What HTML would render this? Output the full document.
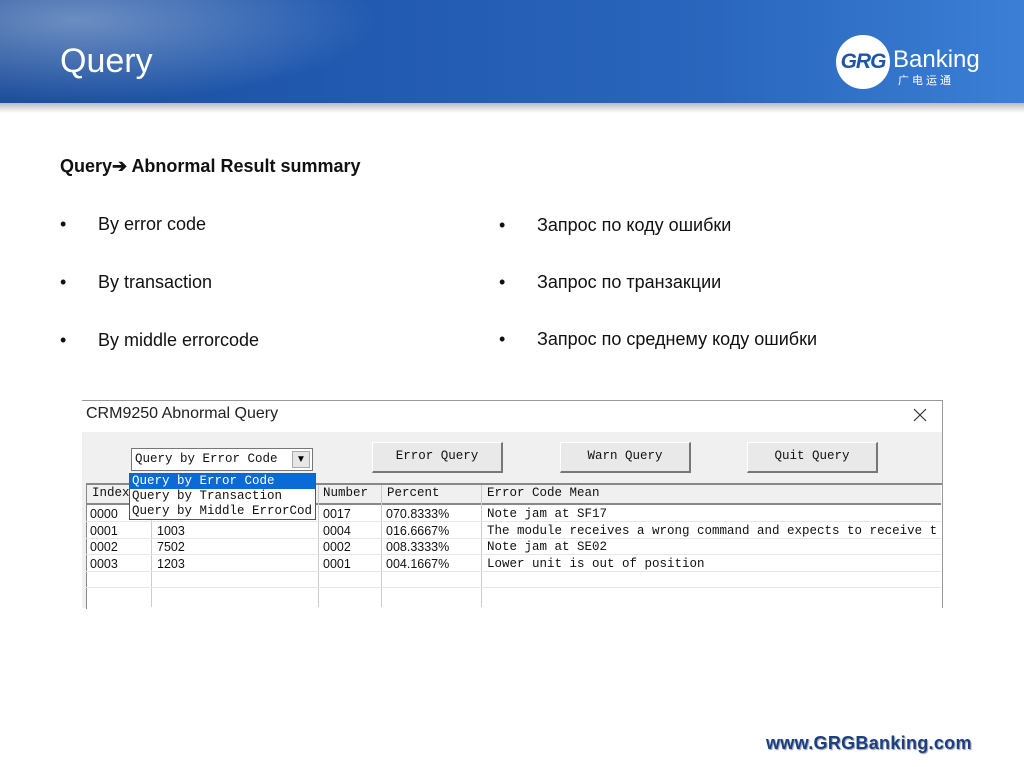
<!DOCTYPE html>
<html><head><meta charset="utf-8"><style>
body{margin:0;width:1024px;height:767px;position:relative;background:#fff;font-family:"Liberation Sans",sans-serif;overflow:hidden}
.a{position:absolute}
.hdr{left:0;top:0;width:1024px;height:103px;background:linear-gradient(90deg,#1d4e9c 0%,#2058ae 30%,#2a66bd 70%,#3b7fd6 100%)}
.mono{font-family:"Liberation Mono","Noto Serif CJK SC",monospace;font-size:12.5px;color:#111;white-space:nowrap}
.btn{background:#e9e9e9;border:1px solid #fff;border-right:2px solid #777;border-bottom:2px solid #777;box-sizing:border-box;text-align:center;line-height:26px}
.hl{left:86px;width:855px;height:1px;background:#e6e6e6}
</style></head><body>
<div class="a hdr"></div>
<div class="a" style="left:0;top:0;width:380px;height:103px;background:radial-gradient(ellipse at 20% 20%,rgba(255,255,255,.35),rgba(255,255,255,0) 70%)"></div>
<div class="a" style="left:0;top:103px;width:1024px;height:10px;background:linear-gradient(#bbb,#fff)"></div>
<div class="a" style="left:60px;top:42px;color:#fff;font-size:34px">Query</div>
<div class="a" style="left:836px;top:35px;width:54px;height:54px;border-radius:50%;background:#fff"></div>
<div class="a" style="left:836px;top:50px;width:54px;text-align:center;color:#1d55a8;font-weight:bold;font-style:italic;font-size:21px;letter-spacing:-1px">GRG</div>
<div class="a" style="left:893px;top:46px;color:#fff;font-size:24px">Banking</div>
<div class="a" style="left:898px;top:72px;color:#fff;font-size:11px;letter-spacing:3px;font-family:'Noto Sans CJK SC',sans-serif">广电运通</div>

<div class="a" style="left:60px;top:156px;font-size:18px;font-weight:bold;color:#111">Query➔ Abnormal Result summary</div>
<div class="a" style="left:60px;top:195px;font-size:18px;color:#111;line-height:58px">•<br>•<br>•</div>
<div class="a" style="left:98px;top:195px;font-size:18px;color:#111;line-height:58px">By error code<br>By transaction<br>By middle errorcode</div>
<div class="a" style="left:499px;top:197px;font-size:18px;color:#111;line-height:57px">•<br>•<br>•</div>
<div class="a" style="left:537px;top:197px;font-size:18px;color:#111;line-height:57px">Запрос по коду ошибки<br>Запрос по транзакции<br>Запрос по среднему коду ошибки</div>

<div class="a" style="left:82px;top:400px;width:860px;height:207px;background:#f0f0f0;border-top:1px solid #999;border-right:1px solid #999"></div>
<div class="a" style="left:82px;top:401px;width:860px;height:31px;background:#fff"></div>
<div class="a" style="left:86px;top:405px;font-size:16px;color:#222">CRM9250 Abnormal Query</div>
<svg class="a" style="left:913px;top:408px" width="14" height="14"><path d="M1 1L13 13M13 1L1 13" stroke="#333" stroke-width="1.2"/></svg>

<div class="a mono" style="left:131px;top:448px;width:182px;height:23px;background:#fff;border:1px solid #777;box-sizing:border-box;line-height:21px;padding-left:3px">Query by Error Code</div>
<div class="a" style="left:292px;top:451px;width:18px;height:17px;background:#e6e6e6;border:1px solid #aaa;box-sizing:border-box;font-size:10px;text-align:center;line-height:15px">▼</div>
<div class="a btn mono" style="left:372px;top:442px;width:131px;height:31px">Error Query</div>
<div class="a btn mono" style="left:560px;top:442px;width:131px;height:31px">Warn Query</div>
<div class="a btn mono" style="left:747px;top:442px;width:131px;height:31px">Quit Query</div>

<div class="a" style="left:86px;top:483px;width:855px;height:124px;background:#fff;border-left:1px solid #888;border-top:2px solid #888"></div>
<div class="a" style="left:87px;top:485px;width:854px;height:18px;background:#f0f0f0;border-bottom:2px solid #888"></div>
<div class="a mono" style="left:92px;top:486px">Index</div>
<div class="a mono" style="left:323px;top:486px">Number</div>
<div class="a mono" style="left:387px;top:486px">Percent</div>
<div class="a mono" style="left:487px;top:486px">Error Code Mean</div>
<div class="a" style="left:151px;top:485px;width:1px;height:122px;background:#ccc"></div>
<div class="a" style="left:318px;top:485px;width:1px;height:122px;background:#ccc"></div>
<div class="a" style="left:381px;top:485px;width:1px;height:122px;background:#ccc"></div>
<div class="a" style="left:481px;top:485px;width:1px;height:122px;background:#ccc"></div>
<div class="a hl" style="top:521px"></div><div class="a hl" style="top:538px"></div><div class="a hl" style="top:554px"></div><div class="a hl" style="top:571px"></div><div class="a hl" style="top:587px"></div>
<div class="a mono" style="left:90px;top:506px;line-height:16.5px;font-family:'Liberation Sans',sans-serif;font-size:12.5px">0000<br>0001<br>0002<br>0003</div>
<div class="a mono" style="left:157px;top:506px;line-height:16.5px;font-family:'Liberation Sans',sans-serif;font-size:12.5px"><br>1003<br>7502<br>1203</div>
<div class="a mono" style="left:323px;top:506px;line-height:16.5px;font-family:'Liberation Sans',sans-serif;font-size:12.5px">0017<br>0004<br>0002<br>0001</div>
<div class="a mono" style="left:386px;top:506px;line-height:16.5px;font-family:'Liberation Sans',sans-serif;font-size:12.5px">070.8333%<br>016.6667%<br>008.3333%<br>004.1667%</div>
<div class="a mono" style="left:487px;top:506px;line-height:16.5px;width:454px;overflow:hidden">Note jam at SF17<br>The module receives a wrong command and expects to receive t<br>Note jam at SE02<br>Lower unit is out of position</div>

<div class="a" style="left:129px;top:473px;width:187px;height:47px;background:#fff;border:1px solid #555;box-sizing:border-box"></div>
<div class="a mono" style="left:130px;top:474px;width:185px;height:15px;background:#0a6ad6;color:#fff;line-height:15px;padding-left:2px;box-sizing:border-box">Query by Error Code</div>
<div class="a mono" style="left:132px;top:489px;line-height:15px">Query by Transaction<br>Query by Middle ErrorCod</div>

<div class="a" style="left:766px;top:733px;font-size:18px;font-weight:bold;color:#1a3f86;text-shadow:1px 1px 1px #999;letter-spacing:0.3px">www.GRGBanking.com</div>
</body></html>
